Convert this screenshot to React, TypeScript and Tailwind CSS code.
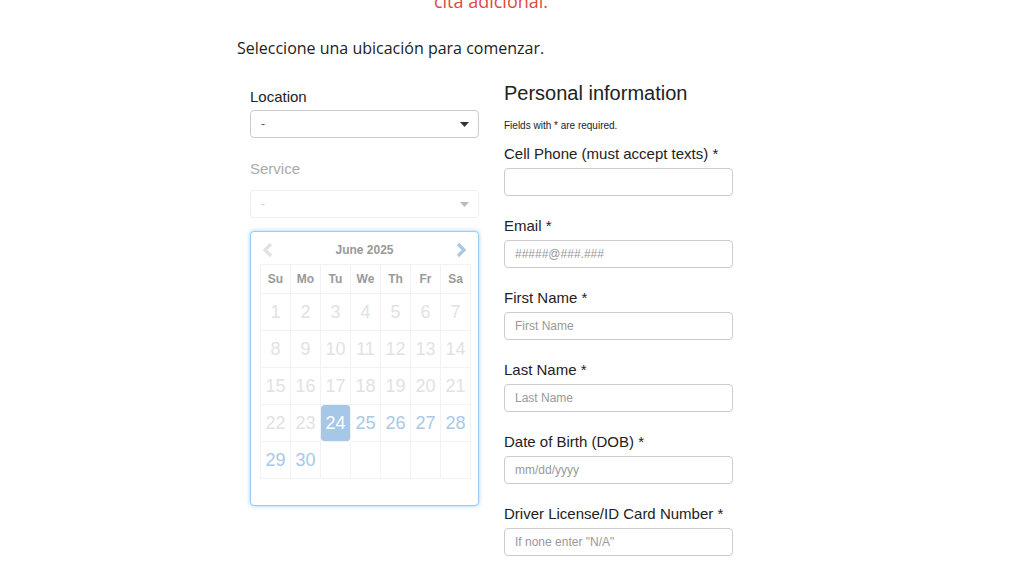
import React from "react";

const weekDays = ["Su", "Mo", "Tu", "We", "Th", "Fr", "Sa"];

const fields = [
  { label: "Cell Phone (must accept texts) *", placeholder: "" },
  { label: "Email *", placeholder: "#####@###.###" },
  { label: "First Name *", placeholder: "First Name" },
  { label: "Last Name *", placeholder: "Last Name" },
  { label: "Date of Birth (DOB) *", placeholder: "mm/dd/yyyy" },
  { label: "Driver License/ID Card Number *", placeholder: 'If none enter "N/A"' },
];

function Caret({ disabled }: { disabled?: boolean }) {
  return (
    <svg width="9" height="5" viewBox="0 0 9 5" className={disabled ? "text-[#bbb]" : "text-[#333]"}>
      <path d="M0 0h9L4.5 5z" fill="currentColor" />
    </svg>
  );
}

function Select({ disabled }: { disabled?: boolean }) {
  return (
    <div
      className={`flex h-[28px] w-[229px] items-center justify-between rounded-[4px] border pl-[10px] pr-[9px] text-[12px] ${
        disabled ? "border-[#eee] text-[#ccc]" : "border-[#ccc] text-[#555]"
      }`}
    >
      <span>-</span>
      <Caret disabled={disabled} />
    </div>
  );
}

function Calendar() {
  // June 2025 starts on Sunday; days before the 24th are unavailable
  const cells: (number | null)[] = [];
  for (let d = 1; d <= 30; d++) cells.push(d);
  while (cells.length < 35) cells.push(null);

  return (
    <div className="h-[275px] w-[229px] rounded-[4px] border border-[#9ccbf2] bg-white shadow-[0_0_4px_rgba(102,175,233,0.6)]">
      <div className="flex h-[32px] items-center justify-between px-[11px] pt-[4px]">
        <svg width="12" height="16" viewBox="0 0 12 16" className="text-[#e2e2e2]">
          <path d="M9 2L3 8l6 6" fill="none" stroke="currentColor" strokeWidth="3.2" />
        </svg>
        <span className="text-[12px] font-bold text-[#999]">June 2025</span>
        <svg width="12" height="16" viewBox="0 0 12 16" className="text-[#a9c8e6]">
          <path d="M3 2l6 6-6 6" fill="none" stroke="currentColor" strokeWidth="3.2" />
        </svg>
      </div>
      <div className="ml-[9px] grid w-[211px] grid-cols-7 border-l border-t border-[#f2f2f2]">
        {weekDays.map((w) => (
          <div
            key={w}
            className="flex h-[29px] items-center justify-center border-b border-r border-[#f2f2f2] text-[12px] font-bold text-[#999]"
          >
            {w}
          </div>
        ))}
        {cells.map((d, i) => {
          const selected = d === 24;
          const enabled = d !== null && d > 24;
          return (
            <div
              key={i}
              className={`flex h-[37px] items-center justify-center border-b border-r border-[#f2f2f2] text-[18px] ${
                selected
                  ? "rounded-[4px] border-[#a7c7e7] bg-[#a7c7e7] text-white"
                  : enabled
                  ? "text-[#a9c8e6]"
                  : "text-[#e2e2e2]"
              }`}
            >
              {d}
            </div>
          );
        })}
      </div>
    </div>
  );
}

export default function App() {
  return (
    <div className="h-[565px] w-[1024px] overflow-hidden bg-white font-['Liberation_Sans',Arial,sans-serif] text-[#222]">
      <div className="ml-[237px] w-[508px]">
        <p className="mt-[-11px] text-center font-['Open_Sans',sans-serif] text-[18px] leading-[24px] text-[#de4b3f]">
          cita adicional.
        </p>
        <p className="mt-[23px] font-['Open_Sans',sans-serif] text-[16px] leading-[24px] text-[#222]">
          Seleccione una ubicación para comenzar.
        </p>

        <div className="ml-[13px] mt-[21px] flex items-start gap-[25px]">
          {/* Left column */}
          <div className="w-[229px] pt-[6px]">
            <div className="text-[15px] leading-[20px]">Location</div>
            <div className="mt-[3px]">
              <Select />
            </div>
            <div className="mt-[21px] text-[15px] leading-[20px] text-[#aaa]">Service</div>
            <div className="mt-[11px]">
              <Select disabled />
            </div>
            <div className="mt-[13px]">
              <Calendar />
            </div>
          </div>

          {/* Right column */}
          <div className="w-[229px]">
            <h2 className="text-[20px] leading-[24px] text-[#222]">Personal information</h2>
            <p className="mt-[14px] text-[10px] leading-[14px]">Fields with * are required.</p>
            <div className="mt-[11px] flex flex-col gap-[20px]">
              {fields.map((f) => (
                <div key={f.label}>
                  <div className="text-[15px] leading-[20px]">{f.label}</div>
                  <div className="mt-[4px] flex h-[28px] w-[229px] items-center rounded-[4px] border border-[#ccc] px-[10px] text-[12px] text-[#999]">
                    {f.placeholder}
                  </div>
                </div>
              ))}
            </div>
          </div>
        </div>
      </div>
    </div>
  );
}
